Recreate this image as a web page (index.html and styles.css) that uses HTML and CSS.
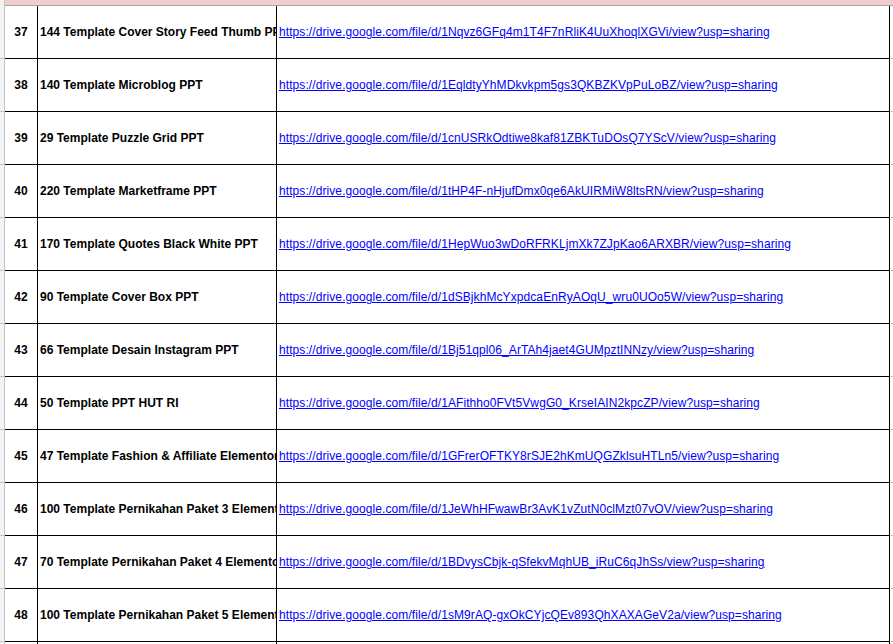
FILE: index.html
```html
<!DOCTYPE html>
<html>
<head>
<meta charset="utf-8">
<link rel="stylesheet" href="styles.css">
</head>
<body>
<div class="sheet">
  <div class="hdr">
    <div class="g"></div>
    <div class="pink"></div>
  </div>
  <div class="row"><div class="g"></div><div class="num">37</div><div class="name">144 Template Cover Story Feed Thumb PPT</div><div class="link"><a href="#">https://drive.google.com/file/d/1Nqvz6GFq4m1T4F7nRliK4UuXhoqlXGVi/view?usp=sharing</a></div><div class="r"></div></div>
  <div class="row"><div class="g"></div><div class="num">38</div><div class="name">140 Template Microblog PPT</div><div class="link"><a href="#">https://drive.google.com/file/d/1EqldtyYhMDkvkpm5gs3QKBZKVpPuLoBZ/view?usp=sharing</a></div><div class="r"></div></div>
  <div class="row"><div class="g"></div><div class="num">39</div><div class="name">29 Template Puzzle Grid PPT</div><div class="link"><a href="#">https://drive.google.com/file/d/1cnUSRkOdtiwe8kaf81ZBKTuDOsQ7YScV/view?usp=sharing</a></div><div class="r"></div></div>
  <div class="row"><div class="g"></div><div class="num">40</div><div class="name">220 Template Marketframe PPT</div><div class="link"><a href="#">https://drive.google.com/file/d/1tHP4F-nHjufDmx0qe6AkUIRMiW8ltsRN/view?usp=sharing</a></div><div class="r"></div></div>
  <div class="row"><div class="g"></div><div class="num">41</div><div class="name">170 Template Quotes Black White PPT</div><div class="link"><a href="#">https://drive.google.com/file/d/1HepWuo3wDoRFRKLjmXk7ZJpKao6ARXBR/view?usp=sharing</a></div><div class="r"></div></div>
  <div class="row"><div class="g"></div><div class="num">42</div><div class="name">90 Template Cover Box PPT</div><div class="link"><a href="#">https://drive.google.com/file/d/1dSBjkhMcYxpdcaEnRyAOqU_wru0UOo5W/view?usp=sharing</a></div><div class="r"></div></div>
  <div class="row"><div class="g"></div><div class="num">43</div><div class="name">66 Template Desain Instagram PPT</div><div class="link"><a href="#">https://drive.google.com/file/d/1Bj51qpl06_ArTAh4jaet4GUMpztINNzy/view?usp=sharing</a></div><div class="r"></div></div>
  <div class="row"><div class="g"></div><div class="num">44</div><div class="name">50 Template PPT HUT RI</div><div class="link"><a href="#">https://drive.google.com/file/d/1AFithho0FVt5VwgG0_KrseIAIN2kpcZP/view?usp=sharing</a></div><div class="r"></div></div>
  <div class="row"><div class="g"></div><div class="num">45</div><div class="name">47 Template Fashion &amp; Affiliate Elementor</div><div class="link"><a href="#">https://drive.google.com/file/d/1GFrerOFTKY8rSJE2hKmUQGZklsuHTLn5/view?usp=sharing</a></div><div class="r"></div></div>
  <div class="row"><div class="g"></div><div class="num">46</div><div class="name">100 Template Pernikahan Paket 3 Elementor</div><div class="link"><a href="#">https://drive.google.com/file/d/1JeWhHFwawBr3AvK1vZutN0clMzt07vOV/view?usp=sharing</a></div><div class="r"></div></div>
  <div class="row"><div class="g"></div><div class="num">47</div><div class="name">70 Template Pernikahan Paket 4 Elementor</div><div class="link"><a href="#">https://drive.google.com/file/d/1BDvysCbjk-qSfekvMqhUB_iRuC6qJhSs/view?usp=sharing</a></div><div class="r"></div></div>
  <div class="row"><div class="g"></div><div class="num">48</div><div class="name">100 Template Pernikahan Paket 5 Elementor</div><div class="link"><a href="#">https://drive.google.com/file/d/1sM9rAQ-gxOkCYjcQEv893QhXAXAGeV2a/view?usp=sharing</a></div><div class="r"></div></div>
  <div class="row tail"><div class="g"></div><div class="num"></div><div class="name"></div><div class="link"></div><div class="r"></div></div>
</div>
</body>
</html>
```
FILE: styles.css
```css
html, body {
  margin: 0;
  padding: 0;
  background: #ffffff;
  overflow: hidden;
}
body {
  width: 893px;
  height: 644px;
  font-family: "Liberation Sans", Arial, sans-serif;
  font-size: 12px;
  color: #000;
}
.sheet {
  display: flex;
  flex-direction: column;
  height: 644px;
  overflow: hidden;
}
.hdr {
  display: grid;
  grid-template-columns: 5px 888px;
  height: 6px;
  flex: none;
}
.hdr .pink {
  background: #f4cccc;
  border-bottom: 1px solid #a6a6a6;
  box-sizing: border-box;
}
.g {
  background: #f3f3f3;
  border-right: 1px solid #c4c4c4;
  box-sizing: border-box;
}
.row {
  display: grid;
  grid-template-columns: 5px 33px 239px 613px 3px;
  height: 53px;
  flex: none;
}
.row.tail {
  height: 2px;
}
.row.tail > div {
  border-bottom: none;
}
.row > div {
  box-sizing: border-box;
  border-bottom: 1px solid #000;
  display: flex;
  align-items: center;
  overflow: hidden;
  white-space: nowrap;
}
.row > .g {
  border-bottom: 1px solid #c4c4c4;
}
.row > .r {
  border-bottom: 1px solid #c4c4c4;
}
.num {
  justify-content: center;
  font-weight: bold;
  border-right: 1px solid #000;
}
.name {
  font-weight: bold;
  padding-left: 2px;
  border-right: 1px solid #000;
}
.link {
  padding-left: 2px;
  border-right: 1px solid #000;
}
.link a {
  color: #0000ff;
  text-decoration: underline;
  letter-spacing: 0.085px;
}
```
